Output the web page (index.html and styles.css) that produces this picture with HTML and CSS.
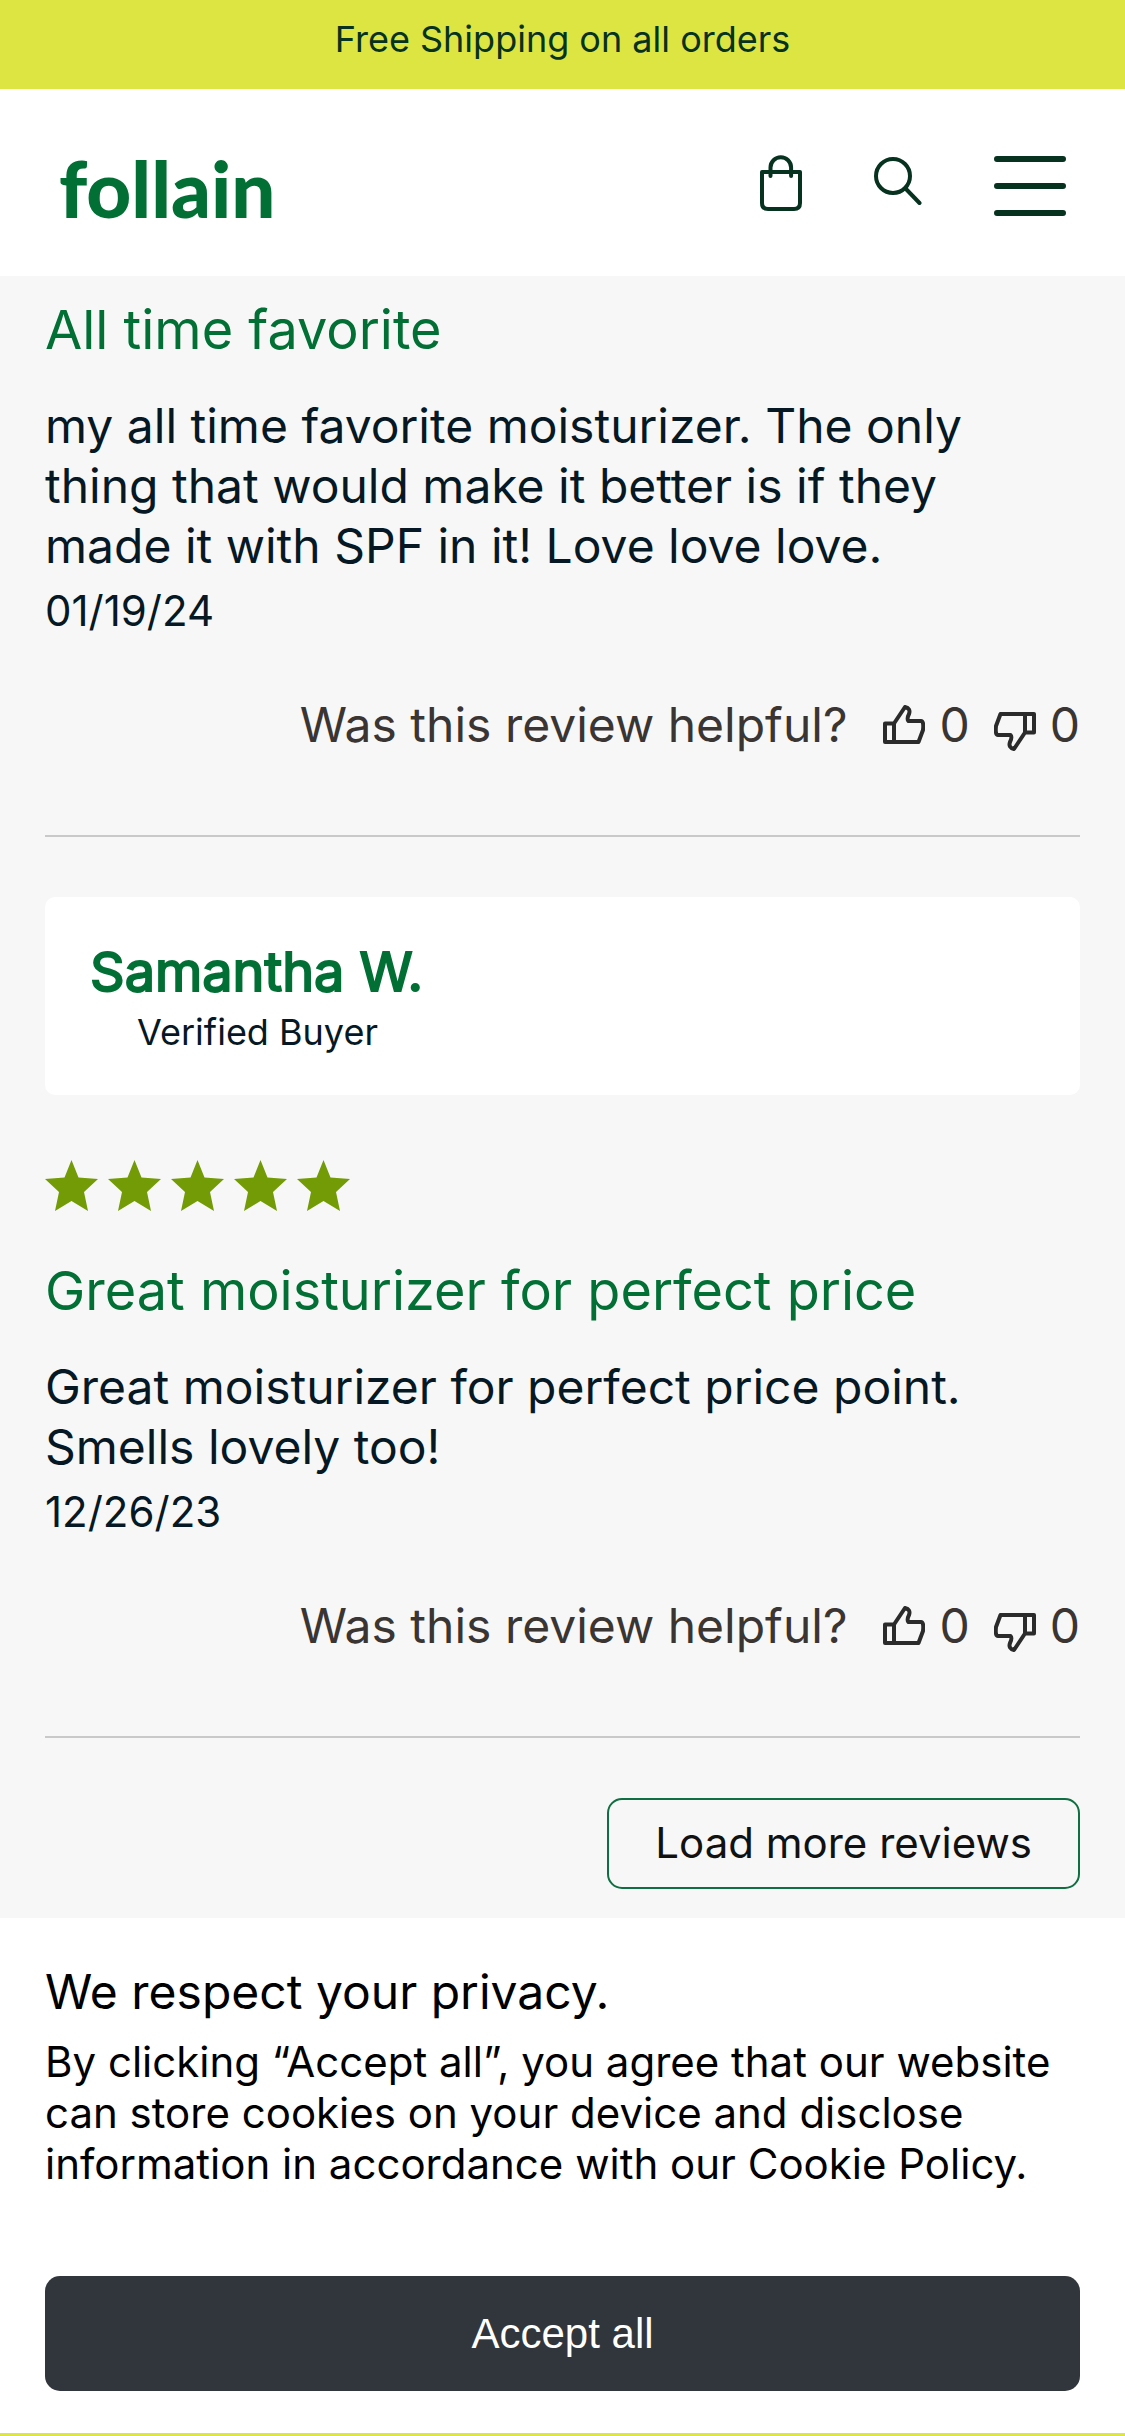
FILE: index.html
```html
<!DOCTYPE html>
<html lang="en">
<head>
    <meta charset="utf-8">
    <meta name="viewport" content="width=device-width, initial-scale=1">
    <title>Follain - Reviews</title>
    <link rel="stylesheet" href="styles.css">
</head>
<body>
    <div class="promo-bar">Free Shipping on all orders</div>

    <header class="header">
        <a href="#" class="logo">follain</a>
        <nav class="header-icons">
            <button type="button" class="icon-btn" aria-label="Cart">
                <svg width="42" height="56" viewBox="0 0 42 56" fill="none" stroke="#06321f" stroke-width="4" stroke-linecap="round" stroke-linejoin="round">
                    <path d="M2 17H40V48Q40 54 34 54H8Q2 54 2 48Z"/>
                    <path d="M10.500 21V12.500a10.300 10.300 0 0 1 20.600 0V21"/>
                </svg>
            </button>
            <button type="button" class="icon-btn" aria-label="Search">
                <svg width="48" height="56" viewBox="0 0 48 56" fill="none" stroke="#06321f" stroke-width="4" stroke-linecap="round">
                    <circle cx="19" cy="21" r="17"/>
                    <path d="M32 34L45.500 48"/>
                </svg>
            </button>
            <button type="button" class="icon-btn" aria-label="Menu">
                <svg width="72" height="70" viewBox="0 0 72 70" fill="none" stroke="#06321f" stroke-width="6" stroke-linecap="round">
                    <path d="M3 11H69M3 38H69M3 65H69"/>
                </svg>
            </button>
        </nav>
    </header>

    <main class="reviews">
        <article class="review">
            <h2 class="review-title">All time favorite</h2>
            <p class="review-text">my all time favorite moisturizer. The only thing that would make it better is if they made it with SPF in it! Love love love.</p>
            <time class="review-date" datetime="2024-01-19">01/19/24</time>
            <div class="helpful">
                <span class="helpful-label">Was this review helpful?</span>
                <button type="button" class="vote" aria-label="Helpful">
                    <svg class="thumb" viewBox="0 0 42 40"><use href="#thumb"/></svg>
                    0
                </button>
                <button type="button" class="vote" aria-label="Not helpful">
                    <svg class="thumb thumb-down" viewBox="0 0 42 40"><use href="#thumb"/></svg>
                    0
                </button>
            </div>
        </article>

        <article class="review">
            <div class="reviewer">
                <h3 class="reviewer-name">Samantha W.</h3>
                <div class="reviewer-status">Verified Buyer</div>
            </div>
            <div class="stars" role="img" aria-label="5 out of 5 stars">
                <svg class="star" viewBox="0 0 53 51"><use href="#star"/></svg>
                <svg class="star" viewBox="0 0 53 51"><use href="#star"/></svg>
                <svg class="star" viewBox="0 0 53 51"><use href="#star"/></svg>
                <svg class="star" viewBox="0 0 53 51"><use href="#star"/></svg>
                <svg class="star" viewBox="0 0 53 51"><use href="#star"/></svg>
            </div>
            <h2 class="review-title">Great moisturizer for perfect price</h2>
            <p class="review-text">Great moisturizer for perfect price point. Smells lovely too!</p>
            <time class="review-date" datetime="2023-12-26">12/26/23</time>
            <div class="helpful">
                <span class="helpful-label">Was this review helpful?</span>
                <button type="button" class="vote" aria-label="Helpful">
                    <svg class="thumb" viewBox="0 0 42 40"><use href="#thumb"/></svg>
                    0
                </button>
                <button type="button" class="vote" aria-label="Not helpful">
                    <svg class="thumb thumb-down" viewBox="0 0 42 40"><use href="#thumb"/></svg>
                    0
                </button>
            </div>
        </article>

        <button type="button" class="load-more">Load more reviews</button>
    </main>

    <section class="cookies">
        <h2 class="cookies-title">We respect your privacy.</h2>
        <p class="cookies-text">By clicking “Accept all”, you agree that our website can store cookies on your device and disclose information in accordance with our Cookie Policy.</p>
        <button type="button" class="accept">Accept all</button>
    </section>

    <!-- shared icon shapes -->
    <svg class="sprite" width="0" height="0" aria-hidden="true">
        <symbol id="thumb" viewBox="0 0 42 40">
            <path d="M2 18.500H11V37H2ZM11 37H35.500L40 25Q41 16 38 16H25.500Q23.500 14 26 9Q28 3.500 22 2L11 18.500" fill="none" stroke="#2b2b2b" stroke-width="4" stroke-linejoin="round"/>
        </symbol>
        <symbol id="star" viewBox="0 0 53 51">
            <path d="M26.500 0L33.500 17.500L53 19L39 32L43 51L26.500 41L10 51L14 32L0 19L19.500 17.500Z" fill="#739b06"/>
        </symbol>
    </svg>
</body>
</html>
```
FILE: styles.css
```css
* {
  box-sizing: border-box;
}

body {
  margin: 0;
  font-family: Inter, "Liberation Sans", sans-serif;
  color: #061824;
  background-color: #dde542;
}

h2, h3, p {
  margin: 0;
  font-weight: 400;
}

button {
  font-family: inherit;
  cursor: pointer;
}

.promo-bar {
  padding: 12px 0 23px;
  font-size: 36px;
  line-height: 54px;
  text-align: center;
  color: #06321f;
  background-color: #dde542;
}

.header {
  display: flex;
  justify-content: space-between;
  align-items: center;
  height: 187px;
  padding: 0 59px;
  background-color: #fff;
}

.logo {
  padding-top: 10px;
  font-family: Lato, sans-serif;
  font-size: 78px;
  font-weight: 900;
  color: #026f35;
  text-decoration: none;
}

.header-icons {
  display: flex;
  align-items: center;
  gap: 72px;
}

.icon-btn {
  display: block;
  padding: 0;
  border: none;
  background: none;
}

.icon-btn svg {
  display: block;
}

.reviews {
  display: flex;
  flex-direction: column;
  padding: 22px 45px 29px;
  background-color: #f7f7f7;
}

.review {
  margin-bottom: 60px;
  padding-bottom: 80px;
  border-bottom: 2px solid #c9c9c9;
}

.reviewer {
  margin-bottom: 65px;
  padding: 42px 45px 36px;
  border-radius: 10px;
  background-color: #fff;
}

.reviewer-name {
  font-size: 54px;
  line-height: 66px;
  color: #026f35;
  -webkit-text-stroke: 2px #026f35;
}

.reviewer-status {
  padding-left: 47px;
  font-size: 36px;
  line-height: 54px;
}

.stars {
  display: flex;
  gap: 10px;
  margin-bottom: 48px;
}

.star {
  width: 53px;
  height: 51px;
}

.review-title {
  margin-bottom: 34px;
  font-size: 54px;
  line-height: 64px;
  color: #026f35;
}

.review-text {
  margin-bottom: 5px;
  padding-right: 45px;
  font-size: 48px;
  line-height: 60px;
}

.review-date {
  display: block;
  margin-bottom: 54px;
  font-size: 42px;
  line-height: 60px;
}

.helpful {
  display: flex;
  justify-content: flex-end;
  align-items: center;
  font-size: 48px;
  line-height: 60px;
  color: #3a3532;
}

.helpful-label {
  margin-right: 36px;
}

.vote {
  display: flex;
  align-items: center;
  gap: 14px;
  padding: 0;
  border: none;
  font-size: 48px;
  line-height: 60px;
  color: inherit;
  background: none;
}

.vote + .vote {
  margin-left: 24px;
}

.thumb {
  width: 42px;
  height: 40px;
}

.thumb-down {
  margin-top: 12px;
  transform: rotate(180deg);
}

.load-more {
  align-self: flex-end;
  padding: 13px 46px 15px;
  border: 2px solid #0f6e42;
  border-radius: 15px;
  font-size: 42px;
  line-height: 59px;
  color: #111;
  background: none;
}

.cookies {
  padding: 44px 45px 42px;
  border-bottom: 2px solid #dde542;
  color: #000;
  background-color: #fff;
}

.cookies-title {
  margin-bottom: 14px;
  font-size: 48px;
  line-height: 60px;
}

.cookies-text {
  margin-bottom: 87px;
  font-size: 42px;
  line-height: 51px;
}

.accept {
  display: block;
  width: 100%;
  padding: 27px;
  border: none;
  border-radius: 15px;
  font-family: "Liberation Sans", Arial, sans-serif;
  font-size: 42px;
  line-height: 61px;
  color: #fff;
  background-color: #31353c;
}

.sprite {
  position: absolute;
}
```
